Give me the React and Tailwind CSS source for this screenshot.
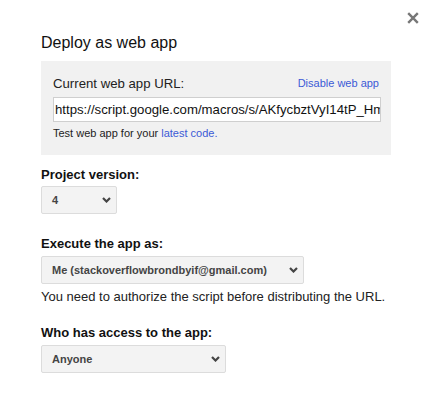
const Chevron = () => (
  <svg width="9" height="6" viewBox="0 0 9 6" className="shrink-0">
    <polyline points="1,1 4.5,4.5 8,1" fill="none" stroke="#444" strokeWidth="2.2" />
  </svg>
);

const Select = ({ value, width }) => (
  <div
    className={`mt-[4px] flex h-[28px] items-center justify-between rounded-[2px] border border-[#dcdcdc] bg-[#f3f3f3] pl-[10px] pr-[5px] ${width}`}
  >
    <span className="text-[11px] font-bold leading-[13px] text-[#444]">{value}</span>
    <Chevron />
  </div>
);

export default function App() {
  return (
    <div className="relative h-[398px] w-[431px] overflow-hidden bg-white font-['Liberation_Sans',Arial,sans-serif] text-[#222]">
      <button className="absolute left-[407px] top-[12px] h-[12px] w-[12px]">
        <svg width="12" height="12" viewBox="0 0 12 12">
          <path d="M1.2 1.2L10.8 10.8M10.8 1.2L1.2 10.8" stroke="#777" strokeWidth="2.4" />
        </svg>
      </button>

      <div className="pl-[41px] pt-[33px]">
        <h1 className="text-[16px] leading-[20px] text-[#111]">Deploy as web app</h1>

        <div className="mt-[8px] w-[350px] bg-[#f1f1f1] pb-[15px] pl-[12px] pr-[10px] pt-[15px]">
          <div className="flex items-start justify-between pr-[2px]">
            <span className="text-[13.2px] leading-[16px] text-[#222]">Current web app URL:</span>
            <a className="mt-[1px] text-[11px] leading-[13px] text-[#3b5ad6]">Disable web app</a>
          </div>
          <div className="mt-[5px] h-[25px] w-[328px] overflow-hidden whitespace-nowrap border border-[#cfcfcf] bg-white pl-[1px] text-[13.2px] leading-[23px] text-[#111]">
            https://script.google.com/macros/s/AKfycbztVyI14tP_Hm4sdLx0b2sK1/exec
          </div>
          <p className="mt-[5px] text-[11px] leading-[13px] text-[#222]">
            Test web app for your <a className="text-[#3b5ad6]">latest code.</a>
          </p>
        </div>

        <div className="mt-[12px] text-[13px] font-bold leading-[15px] text-[#111]">Project version:</div>
        <Select value="4" width="w-[76px]" />

        <div className="mt-[22px] text-[13px] font-bold leading-[15px] text-[#111]">Execute the app as:</div>
        <Select value="Me (stackoverflowbrondbyif@gmail.com)" width="w-[263px] !mt-[5px]" />
        <p className="mt-[5px] text-[13px] leading-[15px] text-[#222]">
          You need to authorize the script before distributing the URL.
        </p>

        <div className="mt-[21px] text-[13px] font-bold leading-[15px] text-[#111]">Who has access to the app:</div>
        <Select value="Anyone" width="w-[185px] !mt-[5px]" />
      </div>
    </div>
  );
}
